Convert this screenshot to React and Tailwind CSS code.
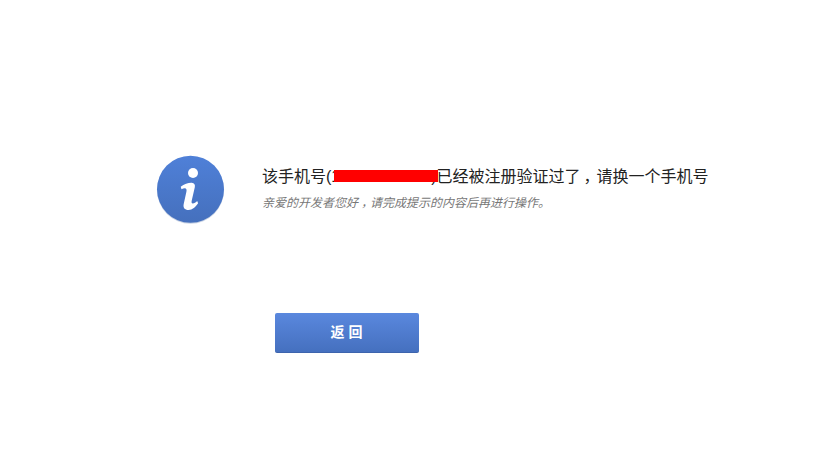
const FONT = "font-['Liberation_Sans','Noto_Sans_CJK_SC',sans-serif]";

function Comma() {
  return <span className="ml-[3px] tracking-[-3px]">，</span>;
}

function InfoIcon() {
  return (
    <svg width="70" height="70" viewBox="0 0 70 70" aria-hidden="true">
      <defs>
        <linearGradient id="infoGrad" x1="0" y1="0" x2="0" y2="1">
          <stop offset="0%" stopColor="#4f80d8" />
          <stop offset="100%" stopColor="#4570bd" />
        </linearGradient>
      </defs>
      <circle cx="35.500" cy="35.200" r="33.500" fill="#c9d3e4" />
      <circle cx="35.500" cy="34.200" r="33.500" fill="url(#infoGrad)" />
      <circle cx="38" cy="18" r="5" fill="#fff" />
      <path
        d="M25.700 31.700c3.500-2.600 8-4.200 11-4 2.800.2 3.600 2 3.100 4.500l-3 13c-.5 2.100-.2 3.200 1 3.200 1.400 0 3-1.100 4.400-2.500l.9 2.400c-2.400 3.700-5.800 6.700-9.500 6.700-4 0-5.700-2.300-4.900-6l2.700-12.200c.5-2.200 0-3.600-1.600-3.600-1 0-2.200.4-3.300 1z"
        fill="#fff"
      />
    </svg>
  );
}

export default function App() {
  return (
    <div className={`h-[450px] w-[813px] overflow-hidden bg-white ${FONT}`}>
      <div className="flex pl-[155px] pt-[155px]">
        <InfoIcon />
        <div className="ml-[37px] pt-[11px]">
          <p className="whitespace-nowrap text-[16px] leading-[22px] text-[#222]">
            该手机号(1
            <span className="relative inline-block h-[12px] w-[91px]">
              <span className="absolute -left-[6px] top-0 h-[12px] w-[104px] bg-[#ff0000]" />
            </span>
            )已经被注册验证过了<Comma />请换一个手机号
          </p>
          <p className="mt-[6px] whitespace-nowrap text-[12px] italic leading-[18px] text-[#777]">
            亲爱的开发者您好<Comma />请完成提示的内容后再进行操作。
          </p>
        </div>
      </div>
      <div className="pl-[275px] pt-[88px]">
        <button className="h-[40px] w-[144px] rounded-[2px] border-b border-[#3d64ad] bg-gradient-to-b from-[#5a88de] to-[#4570bf] pl-[3px] text-[14px] font-bold tracking-[4px] text-white">
          返回
        </button>
      </div>
    </div>
  );
}
